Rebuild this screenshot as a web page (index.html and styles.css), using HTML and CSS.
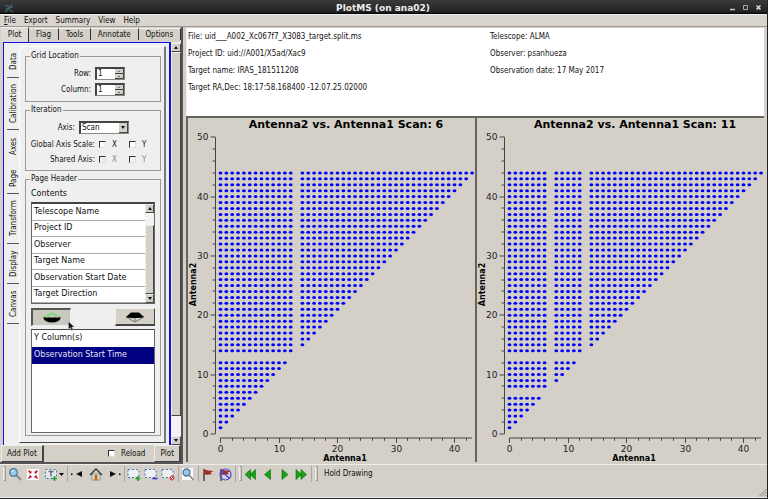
FILE: index.html
```html
<!DOCTYPE html>
<html lang="en">
<head>
<meta charset="utf-8">
<title>PlotMS (on ana02)</title>
<link rel="stylesheet" href="styles.css">
</head>
<body>
<div class="window">
  <header class="titlebar">
    <svg class="app-icon" width="10" height="10" viewBox="0 0 10 10"><path d="M1 2l3 1 2 4 3 2M8 1L6 4 4 6 1 9M2 6l2-1M6 4l3 0" fill="none" stroke="#45606e" stroke-width="1.3"/></svg>
    <h1>PlotMS (on ana02)</h1>
    <div class="window-buttons">
      <button aria-label="Minimize"><svg width="7" height="7"><path d="M1 5.500h5" stroke="#ccc" stroke-width="1.500"/></svg></button>
      <button aria-label="Maximize"><svg width="7" height="7"><path d="M1.500 1.500h4v4h-4z" fill="none" stroke="#aaa"/></svg></button>
      <button aria-label="Close"><svg width="7" height="7"><path d="M1.500 1.500l4 4M5.500 1.500l-4 4" stroke="#ddd" stroke-width="1.500"/></svg></button>
    </div>
  </header>
  <nav class="menubar">
    <button><u>F</u>ile</button><button>Export</button><button>Summary</button><button>View</button><button>Help</button>
  </nav>
  <main class="workspace">
    <aside class="sidebar">
      <div class="tabs">
        <button class="active">Plot</button><button>Flag</button><button>Tools</button><button>Annotate</button><button>Options</button>
      </div>
      <div class="scroll-area">
        <div class="scroll-view">
          <div class="side-tabs">
            <button class="t-data">Data</button><button class="t-calibration">Calibration</button><button class="t-axes">Axes</button><button class="t-page active">Page</button><button class="t-transform">Transform</button><button class="t-display">Display</button><button class="t-canvas">Canvas</button>
          </div>
          <form class="pane">
            <fieldset class="grid-location">
              <legend>Grid Location</legend>
              <div class="field"><label for="row">Row:</label><span class="spin"><input id="row" value="1"><span class="steps"><i class="up"></i><i class="down"></i></span></span></div>
              <div class="field"><label for="col">Column:</label><span class="spin"><input id="col" value="1"><span class="steps"><i class="up"></i><i class="down"></i></span></span></div>
            </fieldset>
            <fieldset class="iteration">
              <legend>Iteration</legend>
              <div class="field axis"><label for="axis">Axis:</label><span class="combo"><select id="axis"><option>Scan</option></select><i class="drop"></i></span></div>
              <div class="checks"><span>Global Axis Scale:</span><label><input type="checkbox">X</label><label><input type="checkbox">Y</label></div>
              <div class="checks disabled"><span>Shared Axis:</span><label><input type="checkbox" disabled>X</label><label><input type="checkbox" disabled>Y</label></div>
            </fieldset>
            <fieldset class="page-header">
              <legend>Page Header</legend>
              <p class="caption">Contents</p>
              <div class="list available">
                <ul><li>Telescope Name</li><li>Project ID</li><li>Observer</li><li>Target Name</li><li>Observation Start Date</li><li>Target Direction</li></ul>
                <div class="scrollbar"><i class="arrow up"></i><i class="gap"></i><i class="thumb"></i><i class="arrow down"></i></div>
              </div>
              <div class="movers">
                <button type="button" class="pressed" aria-label="Move up"><svg width="20" height="12" viewBox="0 0 20 12"><path d="M1 5.500L10 1l9 4.500M6 5L10 1l4 4" fill="none" stroke="#5be05b"/><path d="M1 5.500h18q-2 5-9 5t-9-5z"/></svg></button>
                <button type="button" aria-label="Move down"><svg width="20" height="12" viewBox="0 0 20 12"><path d="M1 6l9 5 9-5M10 6v5" fill="none" stroke="#777"/><path d="M1 6L6 1.500h8L19 6q-2 1-9 1T1 6z"/></svg></button>
                <svg class="cursor" width="7" height="10" viewBox="0 0 7 10"><path d="M.5.5v8l2-2 1 3 1.500-.7-1.200-2.800h2.500z" fill="#111" stroke="#ccc" stroke-width=".4"/></svg>
              </div>
              <div class="list chosen">
                <ul><li>Y Column(s)</li><li class="selected">Observation Start Time</li></ul>
              </div>
            </fieldset>
          </form>
        </div>
        <div class="scrollbar main-scroll"><i class="arrow up"></i><i class="thumb"></i><i class="gap"></i><i class="arrow down"></i></div>
      </div>
      <div class="actions">
        <button class="push">Add Plot</button>
        <label class="reload"><input type="checkbox">Reload</label>
        <button class="push">Plot</button>
      </div>
    </aside>
    <section class="display">
      <div class="info">
        <div><p>File: uid___A002_Xc067f7_X3083_target.split.ms</p><p>Project ID: uid://A001/X5ad/Xac9</p><p>Target name: IRAS_181511208</p><p>Target RA,Dec: 18:17:58.168400 -12.07.25.02000</p></div>
        <div><p>Telescope: ALMA</p><p>Observer: psanhueza</p><p>Observation date: 17 May 2017</p></div>
      </div>
      <div class="plots">
        <svg class="plot" viewBox="0 0 287 343" data-title="158" data-scan="6" data-skip="13"></svg>
        <svg class="plot" viewBox="0 0 287 343" data-title="158" data-scan="11" data-skip="7,13"></svg>
      </div>
    </section>
  </main>
  <footer class="toolbar">
    <i class="grip"></i>
    <button class="roomy" aria-label="Zoom"><svg viewBox="0 0 14 14"><path d="M8 8l5 5" stroke="#8a8a8a" stroke-width="2"/><circle cx="5.500" cy="5.500" r="3.800" fill="#9cc8e8" stroke="#4c7ca0" stroke-width="1.400"/><path d="M4 5q0-2 2-2" stroke="#fff" fill="none"/></svg></button>
    <button class="roomy" aria-label="Zoom to fit"><svg viewBox="0 0 14 14"><path d="M1 2h12v11H1z" fill="#fff"/><path d="M2.500 3.500l2.500 2.500M11.500 3.500L9 6M2.500 11.500l2.500-2.500M11.500 11.500L9 9" stroke="#c00018" stroke-width="1.300"/><path d="M3 6h2V4M9 4v2h2M3 9h2v2M9 11V9h2" fill="none" stroke="#c00018" stroke-width=".8"/></svg></button>
    <button class="wide roomy" aria-label="Annotate"><svg viewBox="0 0 20 14"><path d="M1.500 2.500h11v9h-11z" fill="#e4e8ec" stroke="#427cac" stroke-dasharray="2 2"/><path d="M4.500 4.500h5M7 4.500V9.500" stroke="#667" stroke-width="1.400"/><path d="M8 11.500h5M10.500 9v5" stroke="#2b9f2b" stroke-width="1.600"/><path d="M15 6h5l-2.500 3z"/></svg></button>
    <i class="sep"></i>
    <button class="roomy" aria-label="Back"><svg viewBox="0 0 14 14"><path d="M5 7l6-3v6z" fill="#111"/><path d="M0 6.500h1.500v1.500H0z"/></svg></button>
    <button class="roomy" aria-label="Home"><svg viewBox="0 0 14 14"><path d="M3 7h8v6H3z" fill="#eee8d8" stroke="#777" stroke-width=".8"/><path d="M1 8l6-6 6 6" fill="none" stroke="#333" stroke-width="1.300"/><path d="M5.500 8h3v5h-3z" fill="#b87018"/></svg></button>
    <button class="roomy" aria-label="Forward"><svg viewBox="0 0 14 14"><path d="M9 7L3 4v6z" fill="#111"/><path d="M12 6.500h1.500v1.500H12z"/></svg></button>
    <i class="sep"></i>
    <button aria-label="Add region"><svg viewBox="0 0 14 14"><path d="M1 2.500h11v8H1z" fill="#eef0f3" stroke="#427cac" stroke-dasharray="2 2"/><path d="M8.500 11.500h5M11 9v5" stroke="#2b9f2b" stroke-width="1.600"/></svg></button>
    <button aria-label="Subtract region"><svg viewBox="0 0 14 14"><path d="M1 2.500h11v8H1z" fill="#eef0f3" stroke="#427cac" stroke-dasharray="2 2"/><path d="M8.500 11.500h5" stroke="#3333cc" stroke-width="1.600"/></svg></button>
    <button aria-label="Clear regions"><svg viewBox="0 0 14 14"><path d="M1 2.500h11v8H1z" fill="#eef0f3" stroke="#427cac" stroke-dasharray="2 2"/><circle cx="11" cy="11" r="2" fill="#fff" stroke="#c02020" stroke-width="1"/><path d="M9.600 12.400l2.800-2.800" stroke="#c02020"/></svg></button>
    <i class="sep"></i>
    <button aria-label="Locate"><svg viewBox="0 0 14 14"><path d="M1 1h11v12H1z" fill="#fff"/><path d="M8 8l4.500 5" stroke="#8a8a8a" stroke-width="1.800"/><circle cx="5.500" cy="5.500" r="3.500" fill="#9cc8e8" stroke="#4c7ca0" stroke-width="1.400"/></svg></button>
    <i class="sep"></i>
    <button aria-label="Flag"><svg viewBox="0 0 14 14"><path d="M3 2v12" stroke="#222" stroke-width="1.200"/><path d="M3.500 2.500q3 1 9 1.500l-3 1.500 1.500 1.500q-4 1-7.500.500z" fill="#a82828"/></svg></button>
    <button aria-label="Unflag"><svg viewBox="0 0 14 14"><path d="M3 2v12" stroke="#222" stroke-width="1.200"/><path d="M3.500 2.500q3 1 9 1.500l-3 1.500 1.500 1.500q-4 1-7.500.500z" fill="#a82828"/><circle cx="7.500" cy="7.500" r="5.500" fill="none" stroke="#4848e0" stroke-width="1.200"/><path d="M3.500 4l8 7.500" stroke="#4848e0" stroke-width="1.200"/></svg></button>
    <i class="sep"></i><i class="grip"></i>
    <button aria-label="First"><svg viewBox="0 0 14 14"><path d="M2 7.500l5.500-5v10zM7 7.500l5.500-5v10z" fill="#16a416" stroke="#0a6a0a" stroke-width=".6"/></svg></button>
    <button aria-label="Previous"><svg viewBox="0 0 14 14"><path d="M4.500 7.500l6-5v10z" fill="#16a416" stroke="#0a6a0a" stroke-width=".6"/></svg></button>
    <button aria-label="Next"><svg viewBox="0 0 14 14"><path d="M11 7.500l-6-5v10z" fill="#16a416" stroke="#0a6a0a" stroke-width=".6"/></svg></button>
    <button aria-label="Last"><svg viewBox="0 0 14 14"><path d="M12.500 7.500L7 2.500v10zM7.500 7.500L2 2.500v10z" fill="#16a416" stroke="#0a6a0a" stroke-width=".6"/></svg></button>
    <i class="sep"></i><i class="grip"></i>
    <button class="text">Hold Drawing</button>
  </footer>
  <div class="statusbar"><svg width="9" height="9"><path d="M1 8.500L8.500 1M4 8.500L8.500 4M7 8.500L8.500 7" stroke="#888"/></svg></div>
</div>
<script src="plots.js"></script>
</body>
</html>
```
FILE: styles.css
```css
* { box-sizing: border-box; }
body {
  margin: 0;
  background: #1c1c1c;
  color: #111;
  font: 8px/10px "DejaVu Sans Condensed", "DejaVu Sans", sans-serif;
}
button, input, select { font: inherit; color: inherit; margin: 0; padding: 0; border: 0; background: none; border-radius: 0; }
p, ul, h1 { margin: 0; padding: 0; }
ul { list-style: none; }
i { display: block; }

.window { display: flex; flex-direction: column; min-height: 100vh; background: #d4d0c8; border-right: 1px solid #222; border-bottom: 1px solid #222; }

.titlebar { display: grid; grid-template-columns: 60px 1fr 60px; align-items: center; height: 14px; padding: 1px 5px 0 4px; background: linear-gradient(#3a3a3a, #232323 85%, #000); }
.titlebar h1 { text-align: center; font: bold 9px/12px "DejaVu Sans", sans-serif; color: #eee; }
.window-buttons { display: flex; justify-content: flex-end; gap: 6px; }
.window-buttons button { width: 7px; height: 8px; }
.window-buttons svg { display: block; }

.menubar { display: flex; gap: 8px; height: 13px; padding: 1px 4px 0; border-top: 1px solid #eee; border-bottom: 1px solid #9c9890; background: #d9d5ce; }

.workspace { display: flex; flex: 1; }
.sidebar { display: flex; flex-direction: column; width: 183px; flex: none; border-right: 2px solid #555; border-bottom: 2px solid #555; }
.tabs { display: flex; height: 15px; padding-left: 1px; }
.tabs button { flex: 1 1 auto; border-right: 1px solid #333; border-top: 1px solid #eee; background: #d4d0c8; margin: 1px 0 2px; }
.tabs .active { background: #dedbd5; margin: 0; }

.scroll-area { display: flex; flex: 1; margin-left: 3px; background: #efefef; }
.scroll-view { flex: 1; display: flex; min-width: 0; border: solid #1010e0; border-width: 1px 2px 0 1px; padding: 3px 3px 2px; background: #efefef; }
.side-tabs { display: flex; flex-direction: column; width: 12px; flex: none; }
.side-tabs button { writing-mode: vertical-rl; transform: rotate(180deg); border-top: 1px solid #555; background: #efefef; line-height: 11px; text-align: center; }
.t-data { height: 32px; }
.t-calibration { height: 52px; }
.t-axes { height: 33px; }
.t-page { height: 31px; }
.t-transform { height: 50px; }
.t-display { height: 40px; }
.t-canvas { height: 40px; }
.side-tabs .t-axes { border-top: 0; }

.pane { flex: 1; min-width: 0; display: flex; flex-direction: column; gap: 3px; padding: 4px 3px 6px 5px; border-right: 2px solid #777; border-bottom: 1px solid #444; border-top: 1px solid #fff; border-left: 1px solid #fff; }
fieldset { margin: 0; min-width: 0; padding: 0 5px; border: 1px solid #999; }
legend { padding: 0 1px; margin-left: -1px; line-height: 10px; }
.grid-location { height: 51px; padding-top: 6px; }
.iteration { height: 66px; padding-top: 6px; }
.page-header { flex: 1; }

.field { display: grid; grid-template-columns: 60px 1fr; column-gap: 4px; align-items: center; height: 12px; margin-bottom: 4px; }
.field label { text-align: right; white-space: nowrap; }
.field.axis { grid-template-columns: 44px 1fr; }
.spin, .combo { display: flex; height: 13px; border: 1px solid #888; border-width: 2px 1px 1px 2px; border-top-color: #444; border-left-color: #444; background: #fff; }
.spin { width: 30px; }
.spin input { flex: 1; min-width: 0; padding-left: 1px; }
.steps { display: flex; flex-direction: column; width: 9px; background: #d4d0c8; }
.steps i { flex: 1; display: grid; place-items: center; border-bottom: 1px solid #444; border-right: 1px solid #444; }
.steps i::after, .arrow::after, .drop::after { content: ""; border: 2px solid transparent; border-top-width: 0; border-bottom: 3px solid #111; }
.steps i::after { border-width: 0 1px 1px; }
.steps .down::after, .arrow.down::after, .drop::after { transform: rotate(180deg); }
.combo { width: 50px; }
.combo select { flex: 1; min-width: 0; appearance: none; padding-left: 1px; }
.drop { display: grid; place-items: center; width: 9px; background: #d4d0c8; border-right: 1px solid #444; border-bottom: 1px solid #444; }

.checks { display: grid; grid-template-columns: 64px 26px 1fr; column-gap: 4px; height: 15px; align-items: center; white-space: nowrap; }
.checks span { text-align: right; justify-self: end; }
.checks label { display: flex; align-items: center; gap: 6px; }
.disabled label { color: #888; }
input[type="checkbox"] { appearance: none; width: 7px; height: 7px; border: 1px solid #e0e0e0; border-width: 1px; border-top-color: #333; border-left-color: #333; background: #fff; }
.disabled input[type="checkbox"] { background: #efefef; }

.caption { margin: 5px 0 3px; font-family: "DejaVu Sans", sans-serif; }
.list { background: #fff; border: 1px solid #666; border-top: 2px solid #444; font-family: "DejaVu Sans", sans-serif; }
.available { display: flex; height: 102px; }
.available ul { display: flex; flex-direction: column; flex: 1; }
.available li { display: flex; flex: 1; align-items: center; padding-left: 2px; border-bottom: 1px solid #aaa; }
.chosen { height: 104px; border-width: 1px; }
.chosen li { height: 17px; line-height: 16px; padding-left: 2px; white-space: nowrap; }
.chosen .selected { background: #000080; color: #e8e8f4; }
.movers { position: relative; display: flex; justify-content: space-between; margin: 4px 0 3px; }
.movers button { display: grid; place-items: center; width: 40px; height: 18px; border: 1px solid #eee; border-right-color: #444; border-bottom: 2px solid #444; background: #d4d0c8; }
.movers .pressed { border: 1px solid #eee; border-width: 2px 1px 1px 2px; border-top-color: #555; border-left-color: #555; background: #cbc8c0; }
.cursor { position: absolute; left: 37px; top: 13px; }

.scrollbar { display: flex; flex-direction: column; width: 9px; flex: none; background: #f4f3f1; }
.arrow { display: grid; place-items: center; height: 9px; flex: none; background: #d4d0c8; border: 1px solid #eee; border-right-color: #444; border-bottom-color: #444; }
.gap { height: 12px; flex: none; }
.thumb { flex: 1; background: #d4d0c8; border: 1px solid #eee; border-right-color: #444; border-bottom-color: #444; }
.main-scroll { width: 10px; margin-top: 1px; }
.main-scroll .gap { height: 20px; }

.actions { display: flex; height: 17px; align-items: stretch; padding-left: 1px; }
.push { border: 1px solid #eee; border-right: 2px solid #444; border-bottom-color: #444; padding: 0 5px; background: #d4d0c8; }
.reload { display: flex; align-items: center; gap: 6px; margin-left: auto; margin-right: 9px; }

.display { flex: 1; min-width: 0; display: flex; flex-direction: column; margin: 1px 3px 2px 3px; }
.info { display: grid; grid-template-columns: 302px 1fr; height: 88px; padding-left: 1px; background: #fff; border-left: 1px solid #eee; }
.info p { height: 17px; line-height: 18px; white-space: nowrap; }
.plots { flex: 1; display: flex; }
.plot { flex: 1; min-width: 0; width: 0; height: auto; border-top: 2px solid #66645f; border-left: 2px solid #66645f; }
.plot text { font-family: "DejaVu Sans", sans-serif; font-size: 9px; fill: #222; }
.plot .title { font-size: 11px; font-weight: bold; fill: #000; }
.plot .name { font-size: 8px; font-weight: bold; fill: #000; }
.plot .axis-lines { fill: none; stroke: #444; stroke-width: 1; }
.plot .dots { fill: #0000f8; }

.toolbar { display: flex; align-items: center; height: 18px; padding-left: 1px; border-top: 1px solid #f0eeea; }
.toolbar button { width: 14px; margin: 0 2px 0 1px; }
.toolbar .roomy { margin: 0 2px; }
.toolbar svg { display: block; height: 14px; width: 14px; }
.toolbar .wide, .toolbar .wide svg { width: 20px; }
.toolbar .text { width: auto; margin-left: 6px; }
.grip { width: 3px; height: 15px; margin-left: 2px; border: 1px solid #999; border-left-color: #eee; }
.sep { width: 1px; height: 16px; margin: 0 1px; background: #aaa69e; }
.statusbar { display: flex; justify-content: flex-end; align-items: flex-end; height: 16px; border-bottom: 1px solid #eee; }
```
FILE: plots.js
```js
const NS = "http://www.w3.org/2000/svg";
const left = 32.5;
const bottom = 315.3;
const stepX = 5.85;
const stepY = 5.93;

function add(parent, name, attrs, text) {
  const node = document.createElementNS(NS, name);
  for (const key in attrs) node.setAttribute(key, attrs[key]);
  if (text !== undefined) node.textContent = text;
  parent.appendChild(node);
  return node;
}

for (const plot of document.querySelectorAll(".plot")) {
  const skip = plot.dataset.skip.split(",").map(Number);
  const X = v => left + v * stepX;
  const Y = v => bottom - v * stepY;

  add(plot, "text", { class: "title", x: plot.dataset.title, y: 9, "text-anchor": "middle" },
    "Antenna2 vs. Antenna1 Scan: " + plot.dataset.scan);

  let path = `M${left - 5} ${Y(50)}V${bottom}M${left} ${bottom + 4.2}H${X(43)}`;
  for (let v = 0; v <= 50; v += 2) {
    const y = Math.floor(Y(v)) + 0.5;
    path += `M${left - 5} ${y}h${v % 10 ? -3 : -5}`;
    if (v % 10 === 0) add(plot, "text", { x: left - 12, y: y + 3, "text-anchor": "end" }, v);
  }
  for (let v = 0; v <= 42; v += 2) {
    const x = Math.floor(X(v)) + 0.5;
    path += `M${x} ${bottom + 4}v${v % 10 ? 3 : 5}`;
    if (v % 10 === 0) add(plot, "text", { x, y: bottom + 18, "text-anchor": "middle" }, v);
  }
  add(plot, "path", { class: "axis-lines", d: path });

  add(plot, "text", { class: "name", x: 157, y: 342, "text-anchor": "middle" }, "Antenna1");
  add(plot, "text", { class: "name", transform: "translate(8 166) rotate(-90)", "text-anchor": "middle" }, "Antenna2");

  const dots = add(plot, "g", { class: "dots" });
  for (let row = 1; row <= 44; row++) {
    if (skip.includes(row)) continue;
    for (let col = 0; col < row; col++) {
      if (skip.includes(col)) continue;
      add(dots, "ellipse", { cx: X(col), cy: Y(row), rx: 1.9, ry: 1.5 });
    }
  }
}
```
